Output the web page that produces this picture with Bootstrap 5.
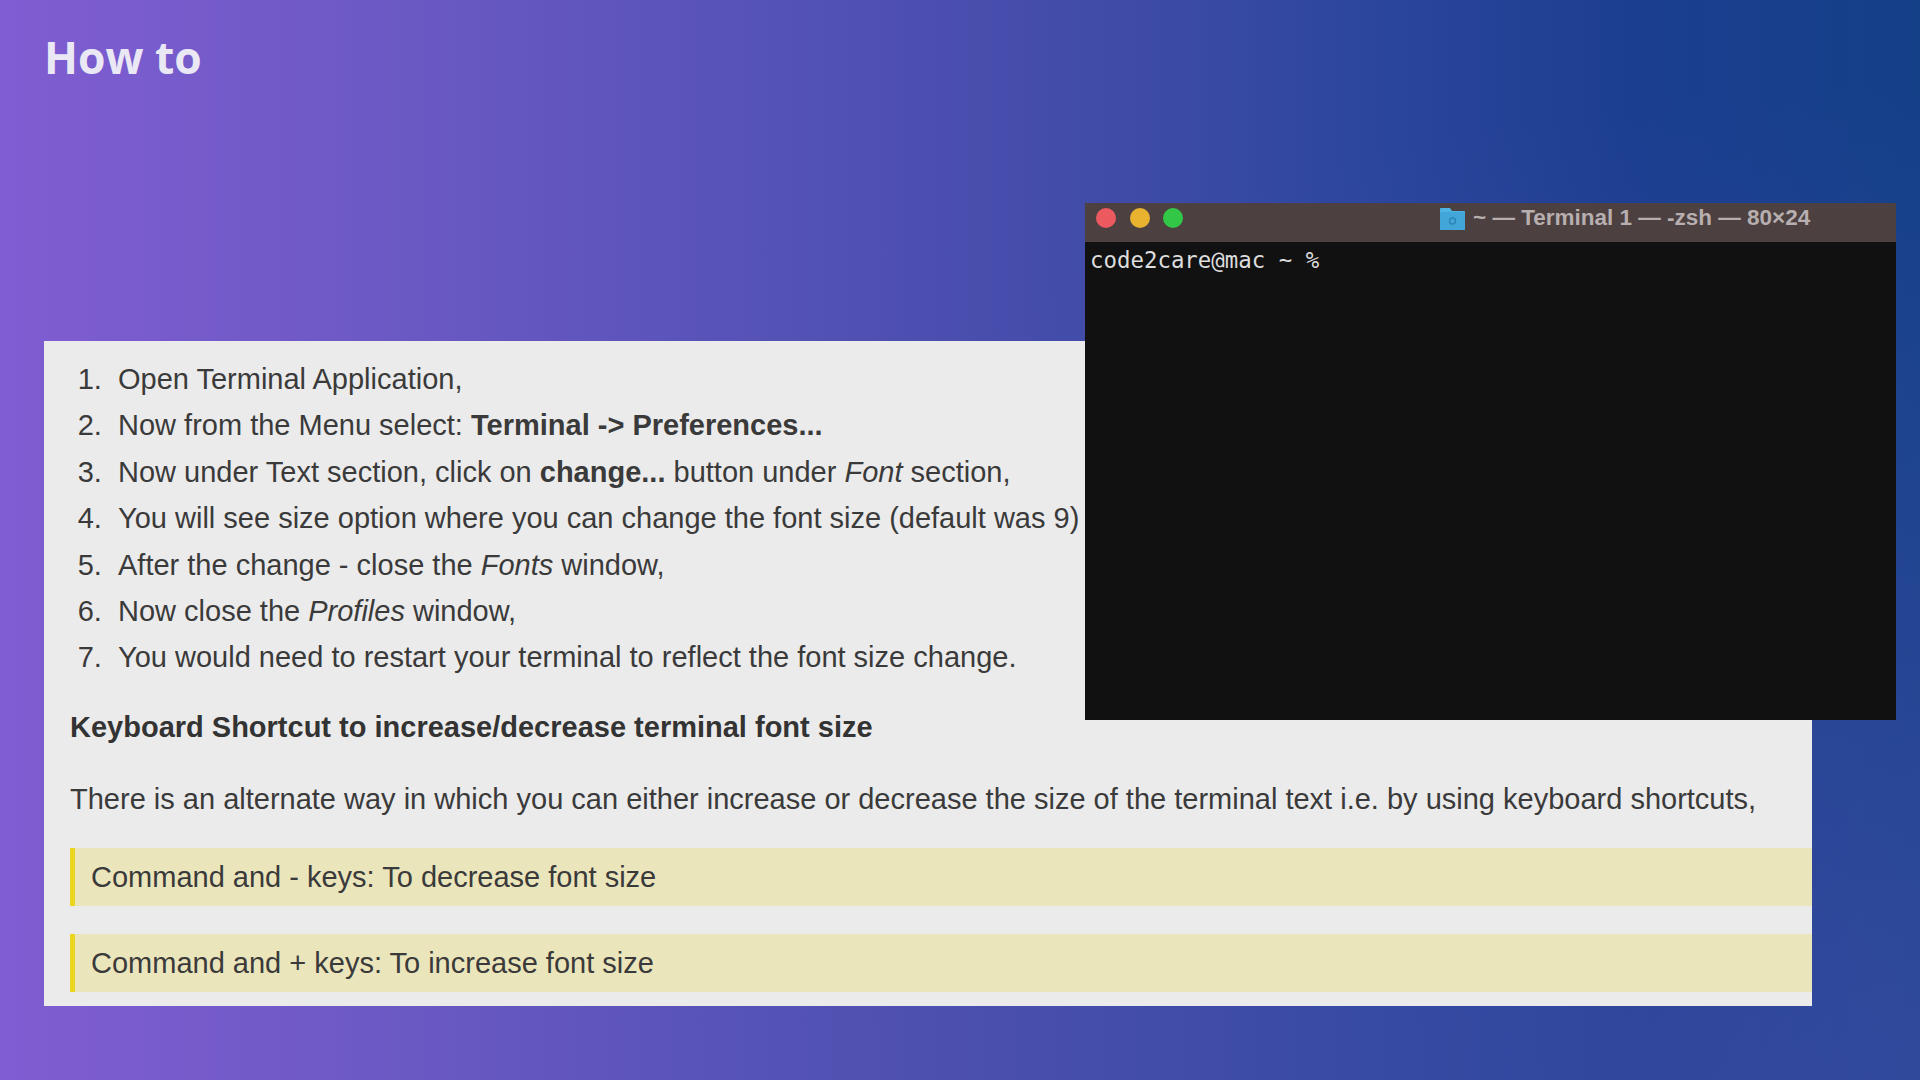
<!DOCTYPE html>
<html lang="en">
<head>
<meta charset="utf-8">
<title>How to</title>
<link href="https://cdn.jsdelivr.net/npm/bootstrap@5.3.0/dist/css/bootstrap.min.css" rel="stylesheet">
<style>
html, body { height: 100%; }
.slide { position: relative; width: 1920px; height: 1080px; overflow: hidden; padding: 32px 44px 0; background: radial-gradient(ellipse 1500px 1000px at 100% 100%, rgba(85,85,180,.45), rgba(85,85,180,0)), linear-gradient(90deg, #805dd2 0%, #6c59c4 20%, #5b54ba 35%, #4a4eae 50%, #3a4aa5 62%, #29459c 73%, #1c3e90 85%, #144088 100%); font-family: "Liberation Sans", Arial, sans-serif; }
.slide-title { margin: 0; height: 309px; font-family: "Open Sans", sans-serif; font-weight: 700; font-size: 44.4px; line-height: 50px; color: #e9e8f4; }
.sheet { width: 1768px; height: 665px; padding: 15px 0 0 26px; background: #ebebeb; color: #3a3a3a; font-size: 29px; line-height: 46.4px; }
.steps { margin: 0 0 23px; padding-left: 48px; }
.steps li::marker { content: counter(list-item) ".\00a0\00a0"; }
.sheet-head { margin: 0 0 26px; font-weight: 700; font-size: 29px; line-height: 46px; color: #333; }
.sheet-text { margin: 0 0 26px; line-height: 46px; }
.keybox { height: 58px; margin-bottom: 28px; padding-left: 16px; border-left: 5px solid #ecd51f; background: #ebe5bc; line-height: 58px; }
.term { position: absolute; left: 1085px; top: 203px; width: 811px; height: 517px; background: #111; }
.term-bar { height: 39px; padding: 5px 0 0 11px; background: #4c4040; }
.dot { width: 20px; height: 20px; border-radius: 50%; }
.dot-r { background: #ec5a5f; }
.dot-y { background: #e9b32f; }
.dot-g { background: #33c748; }
.dots { gap: 13.5px; }
.term-name { position: absolute; left: 355px; top: 3px; gap: 8px; color: #b7afaf; font-size: 22.5px; font-weight: 700; line-height: 24px; }
.term-line { padding: 5px 0 0 5px; font-family: "DejaVu Sans Mono", monospace; font-size: 22.4px; line-height: 26px; color: #ddd; }
</style>
</head>
<body class="m-0">
<div class="slide">
  <h1 class="slide-title">How to</h1>
  <div class="sheet">
    <ol class="steps">
      <li>Open Terminal Application,</li>
      <li>Now from the Menu select: <strong>Terminal -&gt; Preferences...</strong></li>
      <li>Now under Text section, click on <strong>change...</strong> button under <em>Font</em> section,</li>
      <li>You will see size option where you can change the font size (default was 9)</li>
      <li>After the change - close the <em>Fonts</em> window,</li>
      <li>Now close the <em>Profiles</em> window,</li>
      <li>You would need to restart your terminal to reflect the font size change.</li>
    </ol>
    <h2 class="sheet-head">Keyboard Shortcut to increase/decrease terminal font size</h2>
    <p class="sheet-text">There is an alternate way in which you can either increase or decrease the size of the terminal text i.e. by using keyboard shortcuts,</p>
    <div class="keybox">Command and - keys: To decrease font size</div>
    <div class="keybox">Command and + keys: To increase font size</div>
  </div>
  <div class="term">
    <div class="term-bar d-flex align-items-start">
      <div class="dots d-flex">
        <span class="dot dot-r"></span><span class="dot dot-y"></span><span class="dot dot-g"></span>
      </div>
      <div class="term-name d-flex align-items-center">
        <svg width="25" height="23" viewBox="0 0 25 23" aria-hidden="true"><path d="M1 1h9l2 3h12a1 1 0 0 1 1 1v17a1 1 0 0 1-1 1H1a1 1 0 0 1-1-1V2a1 1 0 0 1 1-1z" fill="#4fb3e3"/><rect x="0" y="5" width="25" height="18" rx="1" fill="#43a6d8"/><circle cx="12.5" cy="14" r="3" fill="none" stroke="#2c85b5" stroke-width="1.5"/></svg>
        <span>~ — Terminal 1 — -zsh — 80×24</span>
      </div>
    </div>
    <div class="term-line">code2care@mac ~ %</div>
  </div>
</div>
<script src="https://cdn.jsdelivr.net/npm/bootstrap@5.3.0/dist/js/bootstrap.bundle.min.js"></script>
</body>
</html>
